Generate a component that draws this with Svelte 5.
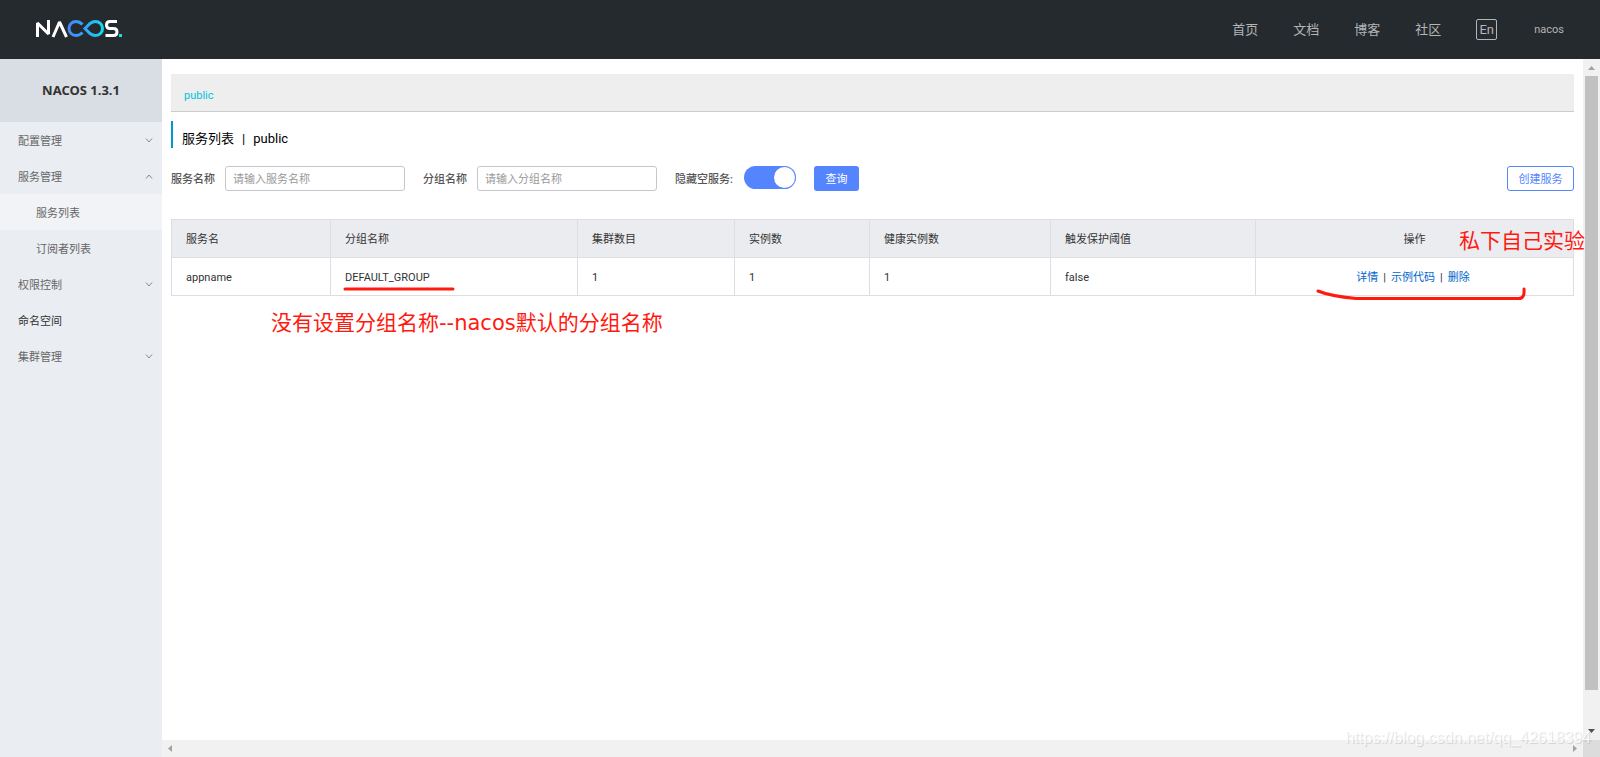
<script lang="ts">
	const links = ['首页', '文档', '博客', '社区'];

	const menu = [
		{ label: '配置管理', arrow: 'down' },
		{ label: '服务管理', arrow: 'up', children: ['服务列表', '订阅者列表'] },
		{ label: '权限控制', arrow: 'down' },
		{ label: '命名空间', arrow: '' },
		{ label: '集群管理', arrow: 'down' }
	];

	const columns = [
		{ title: '服务名', width: 159 },
		{ title: '分组名称', width: 247 },
		{ title: '集群数目', width: 157 },
		{ title: '实例数', width: 135 },
		{ title: '健康实例数', width: 181 },
		{ title: '触发保护阈值', width: 205 },
		{ title: '操作', width: 318 }
	];
	const total = columns.reduce((sum, c) => sum + c.width, 0);

	const services = [
		{ name: 'appname', group: 'DEFAULT_GROUP', clusters: 1, ips: 1, healthy: 1, threshold: 'false' }
	];
	const actions = ['详情', '示例代码', '删除'];

	let current = $state('服务列表');
	let serviceName = $state('');
	let groupName = $state('');
	let hideEmpty = $state(true);
</script>

<div class="page">
	<header>
		<a class="logo" href="#home" aria-label="Nacos">
			<svg width="88" height="19" viewBox="0 0 88 19" fill="none">
				<defs>
					<linearGradient id="loop" x1="32" y1="0" x2="68" y2="0" gradientUnits="userSpaceOnUse">
						<stop offset="0" stop-color="#4a86f7" />
						<stop offset="0.5" stop-color="#2fa4fb" />
						<stop offset="1" stop-color="#16dcf0" />
					</linearGradient>
				</defs>
				<g stroke="#fff" stroke-width="3">
					<path d="M2.500 17V3L13.500 14V0" stroke-linejoin="bevel" />
					<path d="M18 17L24.500 2L31.500 17" stroke-linejoin="bevel" />
					<path d="M82 1.500H75Q71.500 1.500 71.500 5T75 8.500H78.500Q82 8.500 82 12T78.500 15.500H70.500" />
				</g>
				<g stroke="url(#loop)" stroke-width="3">
					<path d="M47.500 4.500C45.500 2.500 43.500 1.500 41 1.500A7 7 0 0 0 41 15.500C43.500 15.500 45.500 14.500 47.500 12.500" />
					<path d="M50 8.500L55 3.500C57 2 58.500 1.500 60.500 1.500A7 7 0 0 1 60.500 15.500C58.500 15.500 57 15 55 13.500Z" />
				</g>
				<rect x="84" y="14" width="3" height="3" fill="#16dcf0" />
			</svg>
		</a>
		<nav>
			{#each links as link}
				<a href="#{link}">{link}</a>
			{/each}
			<button class="lang">En</button>
			<a class="user" href="#user">nacos</a>
		</nav>
	</header>

	<div class="body">
		<aside>
			<h1>NACOS 1.3.1</h1>
			<ul>
				{#each menu as item}
					<li>
						<button class="item" class:plain={!item.arrow}>
							{item.label}
							{#if item.arrow}
								<svg class={item.arrow} width="8" height="5" viewBox="0 0 8 5" fill="none">
									<path d="M1 0.500L4 4L7 0.500" stroke="#888" />
								</svg>
							{/if}
						</button>
						{#if item.children}
							<ul>
								{#each item.children as child}
									<li>
										<button class="item sub" class:active={current === child} onclick={() => (current = child)}>
											{child}
										</button>
									</li>
								{/each}
							</ul>
						{/if}
					</li>
				{/each}
			</ul>
		</aside>

		<div class="scroller">
			<main>
				<div class="namespaces"><a href="#public">public</a></div>
				<h2><span>服务列表</span><span>|</span><span>public</span></h2>

				<form onsubmit={(e) => e.preventDefault()}>
					<label for="service">服务名称</label>
					<input id="service" type="text" placeholder="请输入服务名称" bind:value={serviceName} />
					<label for="group">分组名称</label>
					<input id="group" type="text" placeholder="请输入分组名称" bind:value={groupName} />
					<label for="hide">隐藏空服务:</label>
					<input id="hide" class="switch" type="checkbox" bind:checked={hideEmpty} />
					<button class="primary">查询</button>
					<button class="create" type="button">创建服务</button>
				</form>

				<div class="table">
					<table>
						<colgroup>
							{#each columns as col}
								<col style="width: {(col.width / total) * 100}%" />
							{/each}
						</colgroup>
						<thead>
							<tr>
								{#each columns as col}
									<th>{col.title}</th>
								{/each}
							</tr>
						</thead>
						<tbody>
							{#each services as s}
								<tr>
									<td>{s.name}</td>
									<td>{s.group}</td>
									<td>{s.clusters}</td>
									<td>{s.ips}</td>
									<td>{s.healthy}</td>
									<td>{s.threshold}</td>
									<td>
										<div class="actions">
											{#each actions as action, i}
												{#if i}<span>|</span>{/if}
												<a href="#{action}">{action}</a>
											{/each}
										</div>
									</td>
								</tr>
							{/each}
						</tbody>
					</table>

					<svg class="mark underline" width="112" height="4" viewBox="0 0 112 4">
						<path d="M2 2H110" />
					</svg>
					<svg class="mark swoosh" width="212" height="14" viewBox="0 0 212 14">
						<path d="M2 4Q14 9 40 11.500H202Q209 12 208 2" />
					</svg>
					<p class="note group-note">没有设置分组名称--nacos默认的分组名称</p>
					<p class="note action-note">私下自己实验</p>
				</div>
			</main>

			<div class="bar vertical">
				<svg width="7" height="4" viewBox="0 0 7 4"><path d="M0 4L3.500 0L7 4Z" fill="#a3a3a3" /></svg>
				<div class="thumb"></div>
				<svg width="7" height="4" viewBox="0 0 7 4"><path d="M0 0H7L3.500 4Z" fill="#505050" /></svg>
			</div>
			<div class="bar horizontal">
				<svg width="4" height="7" viewBox="0 0 4 7"><path d="M4 0V7L0 3.500Z" fill="#a3a3a3" /></svg>
				<svg width="4" height="7" viewBox="0 0 4 7"><path d="M0 0V7L4 3.500Z" fill="#a3a3a3" /></svg>
			</div>
			<div class="corner"></div>
		</div>
	</div>

	<div class="watermark">https://blog.csdn.net/qq_42618394</div>
</div>

<style>
	:global(body) {
		margin: 0;
	}

	.page {
		position: relative;
		display: flex;
		flex-direction: column;
		height: 100vh;
		overflow: hidden;
		background: #fff;
		color: #333;
		font: 11px/16px Roboto, 'Noto Sans CJK SC', sans-serif;
	}

	.page * {
		box-sizing: border-box;
	}

	a {
		color: inherit;
		text-decoration: none;
	}

	button,
	input {
		margin: 0;
		font: inherit;
	}

	button {
		padding: 0;
		cursor: pointer;
	}

	header {
		display: flex;
		flex: none;
		align-items: center;
		justify-content: space-between;
		height: 59px;
		padding: 0 36px 0 35px;
		background: #252a2f;
	}

	.logo svg {
		display: block;
	}

	nav {
		display: flex;
		align-items: center;
		gap: 35px;
		color: #b3b5b7;
		font-size: 13px;
	}

	.lang {
		width: 21px;
		height: 21px;
		border: 1px solid #b3b5b7;
		border-radius: 2px;
		background: none;
		color: inherit;
		line-height: 18px;
	}

	.user {
		padding-left: 2px;
		font-size: 11px;
	}

	.body {
		display: flex;
		flex: 1;
		min-height: 0;
	}

	aside {
		flex: none;
		width: 162px;
		background: #eaedf2;
	}

	h1 {
		margin: 0;
		background: #d9dde4;
		font: bold 13px/63px 'Noto Sans', sans-serif;
		text-align: center;
	}

	ul {
		margin: 0;
		padding: 0;
		list-style: none;
	}

	.item {
		display: flex;
		align-items: center;
		justify-content: space-between;
		width: 100%;
		height: 36px;
		padding: 3px 9px 0 18px;
		border: 0;
		background: none;
		color: #666;
		text-align: left;
	}

	.item svg {
		margin-bottom: 3px;
	}

	.item.plain {
		color: #333;
	}

	.item.sub {
		padding-left: 36px;
	}

	.item.active {
		background: #f2f3f7;
	}

	.up {
		transform: rotate(180deg);
	}

	.scroller {
		display: grid;
		flex: 1;
		grid-template: 1fr 17px / 1fr 17px;
		min-width: 0;
	}

	main {
		min-width: 0;
		padding: 15px 9px 0;
	}

	.namespaces {
		height: 38px;
		padding: 0 13px;
		border-bottom: 1px solid #ccc;
		background: #eee;
		color: #00c1de;
		line-height: 44px;
	}

	h2 {
		display: flex;
		gap: 8px;
		height: 27px;
		margin: 9px 0 18px;
		padding-left: 9px;
		border-left: 2px solid #09c;
		color: #000;
		font-size: 13px;
		font-weight: normal;
		line-height: 35px;
	}

	form {
		display: flex;
		align-items: center;
		height: 25px;
	}

	label {
		margin-right: 10px;
		padding-top: 2px;
		color: #555;
		font-weight: 500;
	}

	input[type='text'] {
		width: 180px;
		height: 25px;
		margin-right: 18px;
		padding: 2px 7px 0;
		border: 1px solid #c4c6cf;
		border-radius: 3px;
		outline: 0;
		background: #fff;
		color: #333;
	}

	input::placeholder {
		color: #999;
		opacity: 1;
	}

	.switch {
		display: flex;
		justify-content: flex-end;
		width: 52px;
		height: 23px;
		margin: 0 18px 2px 1px;
		padding: 1px;
		border-radius: 12px;
		appearance: none;
		background: #5584ff;
	}

	.switch:not(:checked) {
		justify-content: flex-start;
		background: #c4c6cf;
	}

	.switch::before {
		width: 21px;
		height: 21px;
		border-radius: 50%;
		background: #fff;
		content: '';
	}

	.primary {
		width: 45px;
		height: 25px;
		padding-top: 2px;
		border: 0;
		border-radius: 3px;
		background: #5584ff;
		color: #fff;
	}

	.create {
		width: 67px;
		height: 25px;
		margin-left: auto;
		padding-top: 2px;
		border: 1px solid #5584ff;
		border-radius: 3px;
		background: #fff;
		color: #5584ff;
	}

	.table {
		position: relative;
		margin-top: 28px;
	}

	table {
		width: 100%;
		border-collapse: collapse;
		table-layout: fixed;
	}

	th,
	td {
		height: 38px;
		padding: 2px 14px 0;
		border: 1px solid #dcdee3;
		font-weight: normal;
		text-align: left;
	}

	th {
		background: #ebecf0;
	}

	th:last-child {
		text-align: center;
	}

	.actions {
		display: flex;
		justify-content: center;
		gap: 5px;
		padding-right: 3px;
		color: #06c;
	}

	.actions span {
		color: #333;
	}

	.mark {
		position: absolute;
		fill: none;
		stroke: #ff1a10;
		stroke-width: 3;
		stroke-linecap: round;
	}

	.underline {
		top: 68px;
		left: 172px;
	}

	.swoosh {
		top: 68px;
		right: 46px;
	}

	.note {
		position: absolute;
		margin: 0;
		color: #ff1a10;
		font: 21px/28px 'DejaVu Sans', 'Noto Sans CJK SC', sans-serif;
		white-space: nowrap;
	}

	.group-note {
		top: 90px;
		left: 100px;
	}

	.action-note {
		top: 8px;
		right: -11px;
	}

	.bar {
		display: flex;
		align-items: center;
		justify-content: space-between;
		background: #f1f1f1;
	}

	.vertical {
		flex-direction: column;
		padding: 7px 0;
	}

	.horizontal {
		padding: 0 6px;
	}

	.thumb {
		width: 13px;
		height: 92%;
		margin: 6px 0 auto;
		background: #c1c1c1;
	}

	.corner {
		background: #dcdcdc;
	}

	.watermark {
		position: absolute;
		right: 9px;
		bottom: 9px;
		color: rgba(255, 255, 255, 0.8);
		font: 16px/20px 'Liberation Sans', sans-serif;
		text-shadow: 1px 1px 1px rgba(0, 0, 0, 0.14);
	}
</style>
